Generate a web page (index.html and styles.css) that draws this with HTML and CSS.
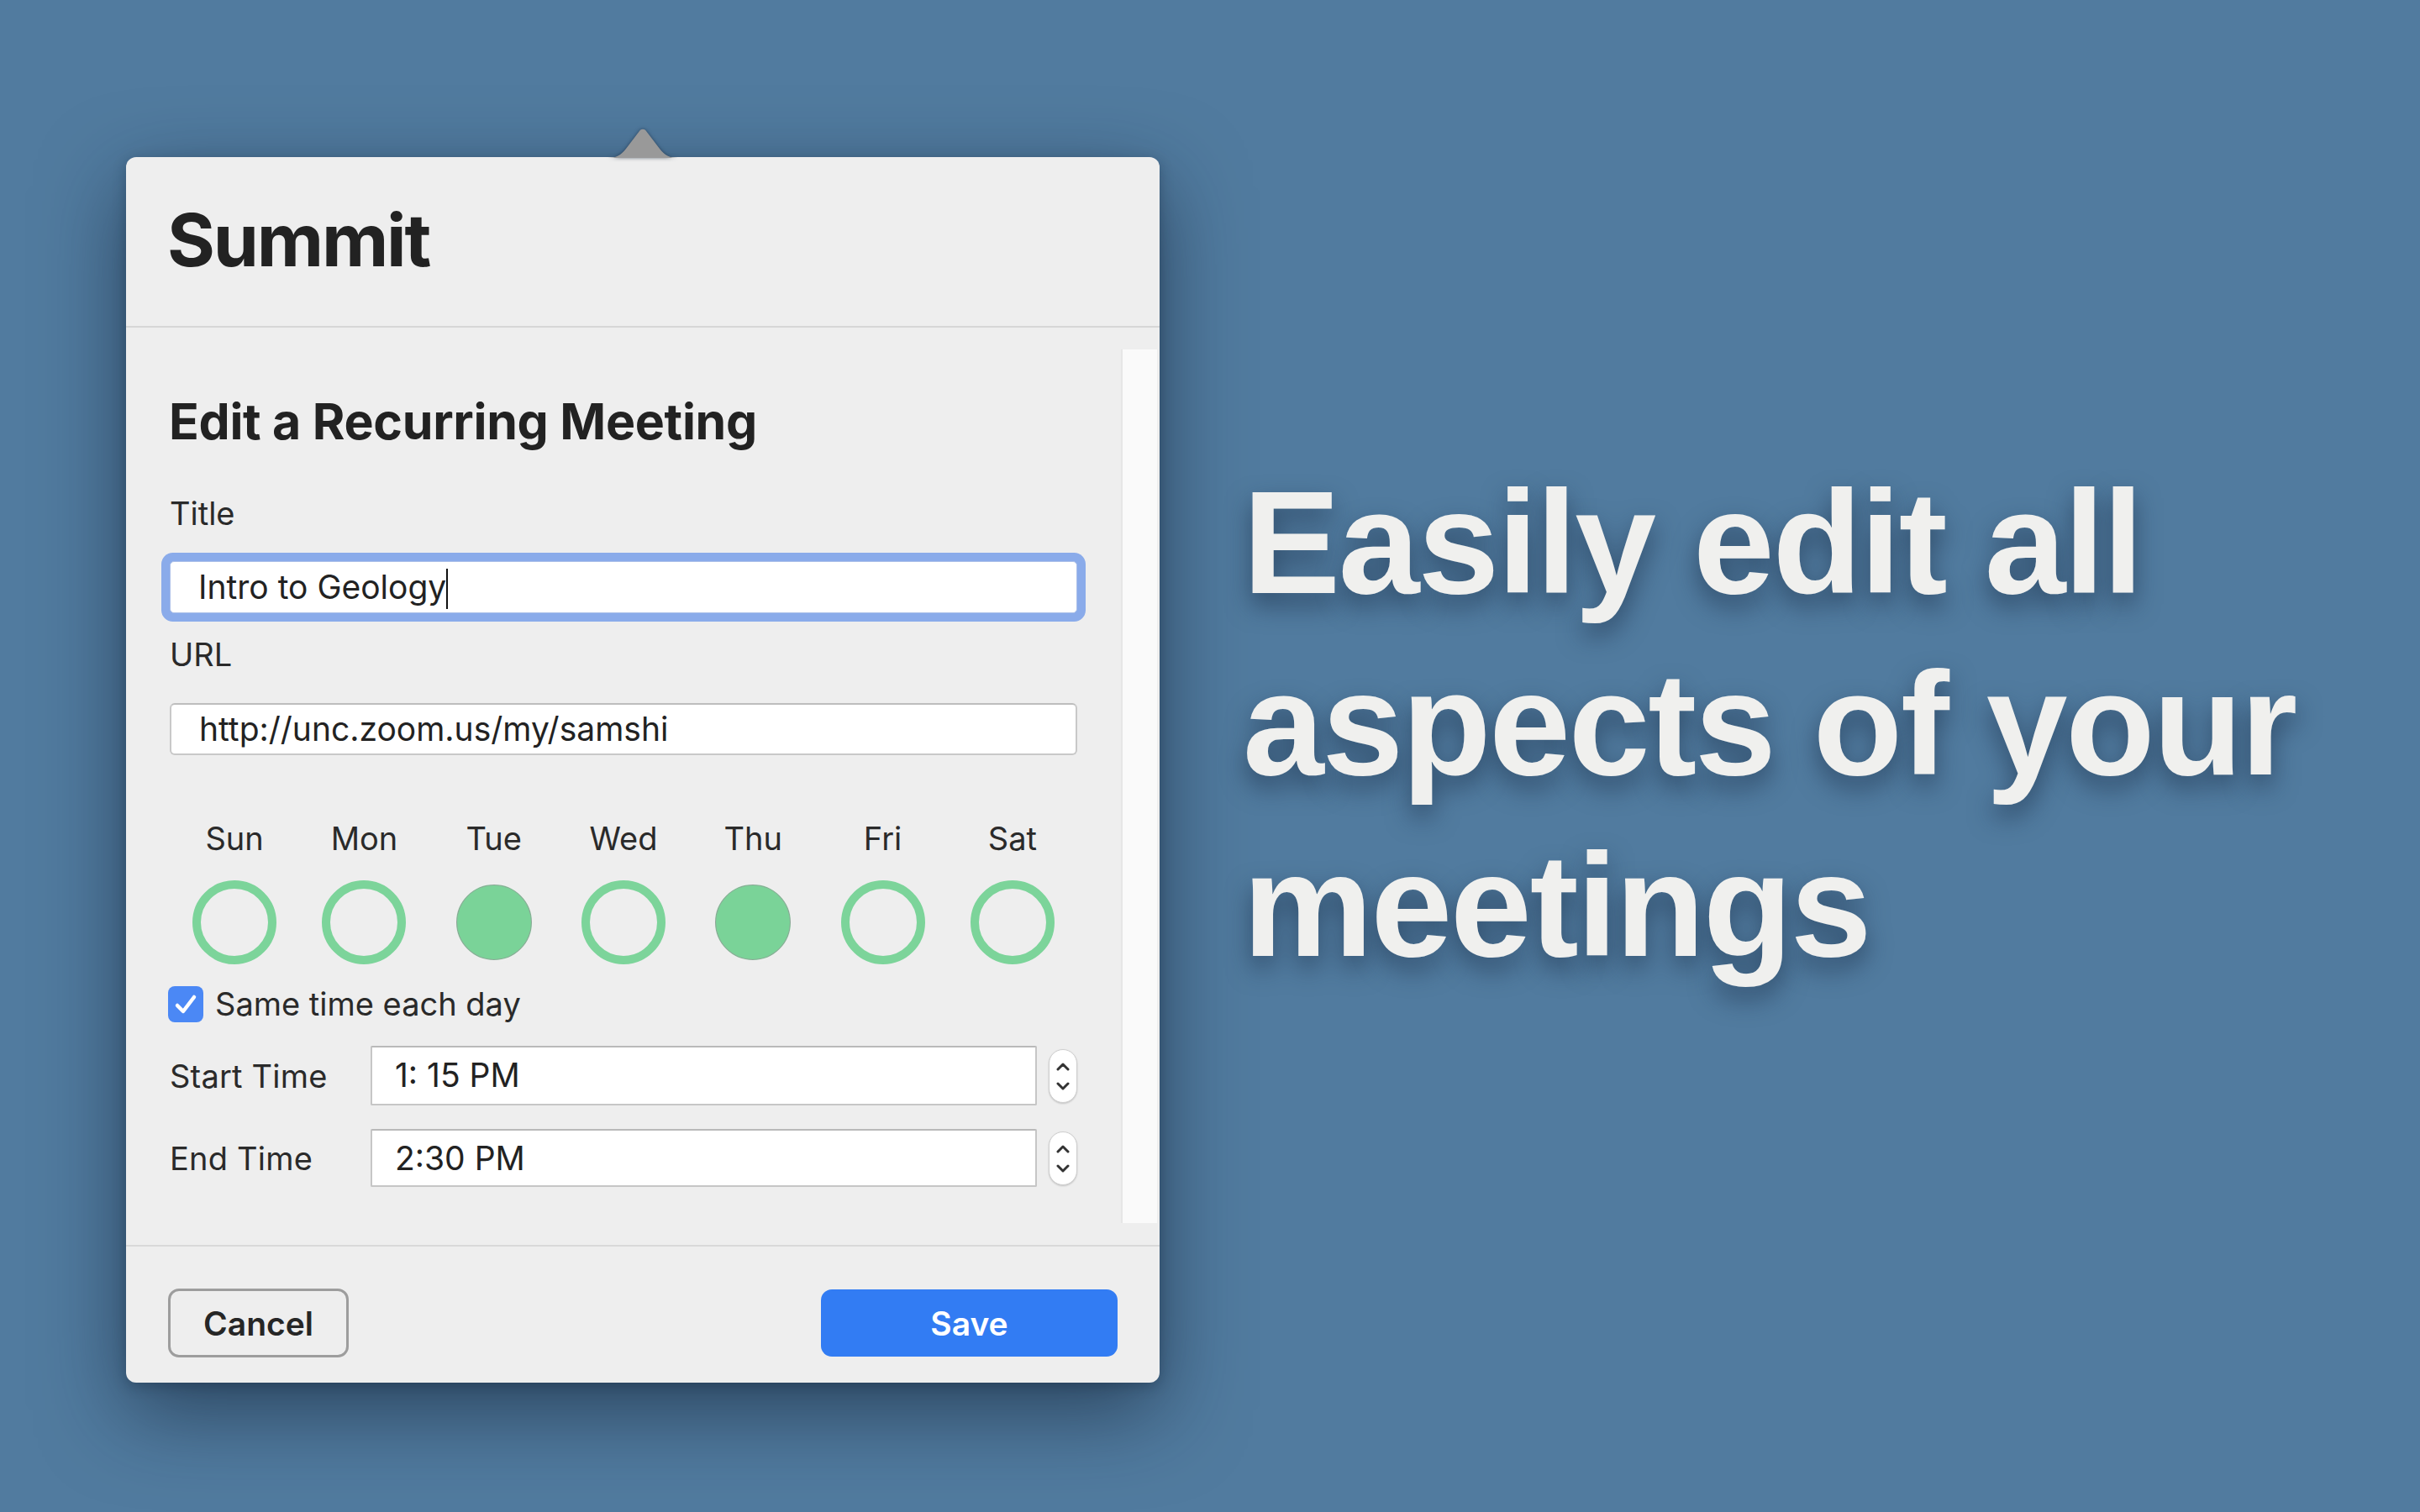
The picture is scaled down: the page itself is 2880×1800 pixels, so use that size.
FILE: index.html
```html
<!DOCTYPE html>
<html lang="en">
<head>
<meta charset="utf-8">
<title>Summit – Edit a Recurring Meeting</title>
<link rel="stylesheet" href="styles.css">
</head>
<body>
<main class="stage">
  <section class="popover">
    <svg class="popover-arrow" width="84" height="40" viewBox="0 0 84 40" aria-hidden="true">
      <path d="M0 40 C10 40 16 37 22 29 L38 8 C40 5 44 5 46 8 L62 29 C68 37 74 40 84 40 Z" fill="#999999"/>
    </svg>
    <header class="pop-header">
      <h1 class="app-title">Summit</h1>
    </header>
    <div class="pop-body">
      <div class="form">
        <h2 class="section-title">Edit a Recurring Meeting</h2>
        <div class="label label-first">Title</div>
        <div class="field field-focus">Intro to Geology<span class="caret"></span></div>
        <div class="label label-url">URL</div>
        <div class="field field-url">http://unc.zoom.us/my/samshi</div>
        <div class="days">
          <div class="day"><span class="day-name">Sun</span><span class="dot"></span></div>
          <div class="day"><span class="day-name">Mon</span><span class="dot"></span></div>
          <div class="day"><span class="day-name">Tue</span><span class="dot dot-on"></span></div>
          <div class="day"><span class="day-name">Wed</span><span class="dot"></span></div>
          <div class="day"><span class="day-name">Thu</span><span class="dot dot-on"></span></div>
          <div class="day"><span class="day-name">Fri</span><span class="dot"></span></div>
          <div class="day"><span class="day-name">Sat</span><span class="dot"></span></div>
        </div>
        <div class="check-row">
          <span class="checkbox">
            <svg width="42" height="43" viewBox="0 0 42 43" aria-hidden="true"><path d="M11 23 L18 30 L31 13" fill="none" stroke="#ffffff" stroke-width="4.5" stroke-linecap="round" stroke-linejoin="round"/></svg>
          </span>
          <span class="check-label">Same time each day</span>
        </div>
        <div class="time-row">
          <span class="time-label">Start Time</span>
          <div class="time-field">1: 15 PM</div>
          <span class="stepper">
            <svg width="34" height="64" viewBox="0 0 34 64" aria-hidden="true"><path d="M11 24 L17 18 L23 24" fill="none" stroke="#333" stroke-width="3" stroke-linecap="round" stroke-linejoin="round"/><path d="M11 41 L17 47 L23 41" fill="none" stroke="#333" stroke-width="3" stroke-linecap="round" stroke-linejoin="round"/></svg>
          </span>
        </div>
        <div class="time-row time-row-end">
          <span class="time-label">End Time</span>
          <div class="time-field">2:30 PM</div>
          <span class="stepper">
            <svg width="34" height="64" viewBox="0 0 34 64" aria-hidden="true"><path d="M11 24 L17 18 L23 24" fill="none" stroke="#333" stroke-width="3" stroke-linecap="round" stroke-linejoin="round"/><path d="M11 41 L17 47 L23 41" fill="none" stroke="#333" stroke-width="3" stroke-linecap="round" stroke-linejoin="round"/></svg>
          </span>
        </div>
      </div>
      <div class="scroll-track"></div>
    </div>
    <footer class="pop-footer">
      <button class="btn btn-cancel" type="button">Cancel</button>
      <button class="btn btn-save" type="button">Save</button>
    </footer>
  </section>
  <h2 class="headline">Easily edit all<br>aspects of your<br>meetings</h2>
</main>
</body>
</html>
```
FILE: styles.css
```css
html, body {
  margin: 0;
  padding: 0;
}
body {
  width: 2880px;
  height: 1800px;
  overflow: hidden;
  background: #517b9f;
  font-family: Inter, "Noto Sans", sans-serif;
}
.stage {
  display: flex;
  align-items: flex-start;
  padding: 187px 0 0 150px;
}
.popover {
  position: relative;
  width: 1230px;
  height: 1459px;
  background: #eeeeee;
  border-radius: 12px;
  display: flex;
  flex-direction: column;
  box-shadow: 0 34px 100px rgba(16, 32, 52, 0.6), 0 4px 16px rgba(16, 32, 52, 0.3);
  flex-shrink: 0;
}
.popover-arrow {
  position: absolute;
  top: -39px;
  left: 573px;
  display: block;
  filter: drop-shadow(0 0 2px rgba(20, 35, 55, 0.6));
}
.pop-header {
  border-bottom: 2px solid #d6d6d6;
  padding: 47px 0 0 49px;
  box-sizing: content-box;
  height: 154px;
}
.app-title {
  margin: 0;
  font: 700 87px/104px Inter, sans-serif;
  color: #222222;
  letter-spacing: -2.2px;
}
.pop-body {
  flex: 1;
  display: flex;
  justify-content: space-between;
}
.form {
  width: 1080px;
  padding: 76px 0 0 52px;
}
.section-title {
  margin: 0;
  margin-left: -1px;
  font: 700 59px/72px Inter, sans-serif;
  color: #222222;
  letter-spacing: -0.3px;
}
.label {
  font: 400 38px/46px Inter, sans-serif;
  color: #2a2a2a;
}
.label-first { margin-top: 50px; }
.label-url { margin-top: 26px; }
.field {
  height: 62px;
  box-sizing: border-box;
  background: #ffffff;
  border-radius: 6px;
  font: 400 39px/58px Inter, sans-serif;
  color: #222222;
  padding-left: 33px;
  border: 2px solid #c8c8c8;
  border-top-color: #bdbdbd;
}
.field-focus {
  margin-top: 34px;
  border: 1px solid #aabfe9;
  line-height: 60px;
  box-shadow: 0 0 0 10px #8aabea;
  border-radius: 5px;
}
.caret {
  display: inline-block;
  width: 2px;
  height: 48px;
  background: #111111;
  vertical-align: -12px;
}
.field-url { margin-top: 35px; }
.days {
  margin-top: 76px;
  display: grid;
  grid-template-columns: repeat(7, 1fr);
}
.day {
  display: flex;
  flex-direction: column;
  align-items: center;
  gap: 27px;
}
.day-name {
  font: 400 38px/46px Inter, sans-serif;
  color: #2a2a2a;
}
.dot {
  width: 100px;
  height: 100px;
  box-sizing: border-box;
  border-radius: 50%;
  border: 10px solid #7cd49a;
}
.dot-on {
  background: #7ad398;
  border: 5px solid #eeeeee;
  box-shadow: inset 0 0 0 1px #8ea597;
}
.check-row {
  margin-top: 26px;
  display: flex;
  align-items: center;
  height: 43px;
}
.checkbox {
  width: 42px;
  height: 43px;
  margin-left: -2px;
  border-radius: 8px;
  background: #4b88f5;
  display: block;
}
.checkbox svg { display: block; }
.check-label {
  margin-left: 14px;
  font: 400 38px/43px Inter, sans-serif;
  color: #2a2a2a;
}
.time-row {
  margin-top: 28px;
  display: flex;
  align-items: center;
  height: 71px;
}
.time-row-end { height: 69px; }
.time-label {
  width: 239px;
  font: 400 38px/46px Inter, sans-serif;
  color: #2a2a2a;
  letter-spacing: 0.2px;
}
.time-field {
  width: 793px;
  height: 100%;
  box-sizing: border-box;
  background: #ffffff;
  border: 2px solid #c6c6c6;
  border-top-color: #b9b9b9;
  border-radius: 2px;
  font: 400 39px/66px Inter, sans-serif;
  color: #222222;
  padding-left: 27px;
}
.stepper {
  margin-left: 14px;
  width: 34px;
  height: 64px;
  box-sizing: border-box;
  border-radius: 17px;
  background: #ffffff;
  border: 1px solid #cfcfcf;
  box-shadow: 0 1px 2px rgba(0, 0, 0, 0.18);
  display: block;
}
.stepper svg { display: block; margin: -1px; }
.scroll-track {
  width: 41px;
  margin: 26px 3px 26px 0;
  background: #fafafa;
  border-left: 2px solid #e6e6e6;
}
.pop-footer {
  height: 112px;
  border-top: 2px solid #d9d9d9;
  padding: 50px 50px 0;
  display: flex;
  justify-content: space-between;
  align-items: flex-start;
}
.btn {
  font: 600 39px/1 Inter, sans-serif;
  border-radius: 13px;
  box-sizing: border-box;
  cursor: pointer;
}
.btn-cancel {
  width: 215px;
  height: 82px;
  background: #eeeeee;
  border: 3px solid #9d9d9d;
  color: #262626;
}
.btn-save {
  margin-top: 1px;
  width: 353px;
  height: 80px;
  background: #327cf3;
  border: none;
  color: #ffffff;
}
.headline {
  margin: 351px 0 0 99px;
  font: 700 174px/216px "Liberation Sans", Arial, sans-serif;
  letter-spacing: -2.2px;
  color: #f0f0ee;
  text-shadow: 0 14px 30px rgba(25, 45, 70, 0.6);
  white-space: nowrap;
}
```
